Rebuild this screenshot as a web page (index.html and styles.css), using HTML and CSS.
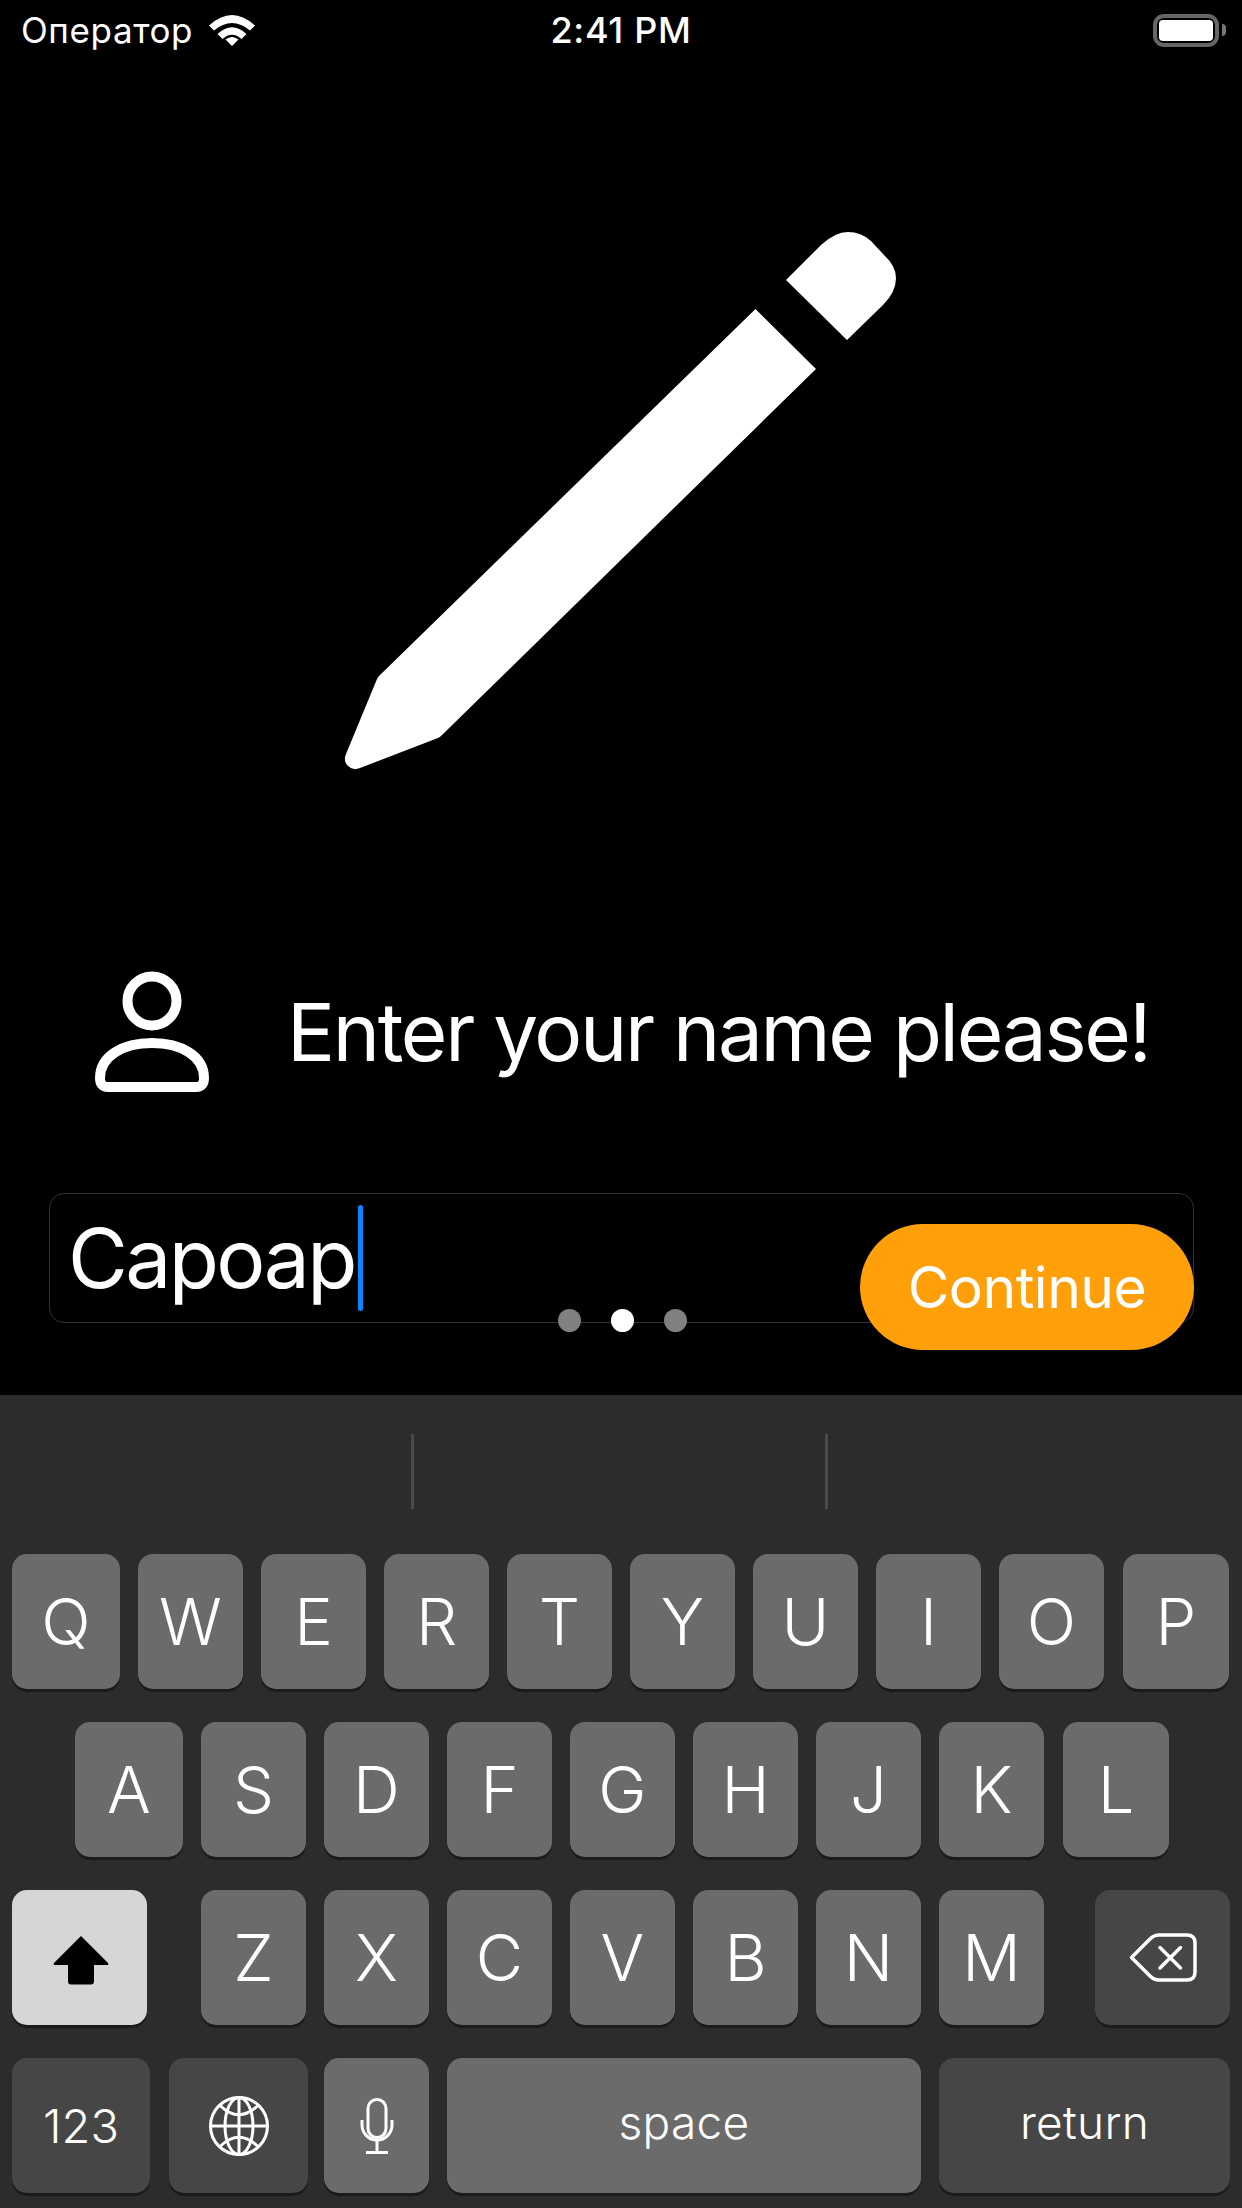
FILE: index.html
```html
<!DOCTYPE html>
<html lang="en">
<head>
  <meta charset="UTF-8" />
  <meta name="viewport" content="width=device-width, initial-scale=1.0" />
  <title>Enter your name</title>
  <link rel="stylesheet" href="styles.css">
</head>
<body>
  <main class="screen">
    <div class="status">
      <div class="status-left">
        <span>Оператор</span>
        <svg class="wifi" viewBox="0 0 46 31">
          <path fill="#fff" d="M0 10.500 Q23 -10.500 46 10.500 L41 15.500 Q23 0.500 5 15.500 Z" />
          <path fill="#fff" d="M8.500 19 Q23 5.500 37.500 19 L32.500 24 Q23 15.500 13.500 24 Z" />
          <path fill="#fff" d="M23 31 L16.500 24.500 Q23 19.500 29.500 24.500 Z" />
        </svg>
      </div>
      <div class="status-time">2:41 PM</div>
      <div class="status-right">
        <div class="battery"><div class="battery-level"></div></div>
        <div class="battery-nub"></div>
      </div>
    </div>

    <svg class="pencil" viewBox="340 225 560 550">
      <path fill="#fff" d="M786 280 L821 245 Q835 232 848 232 Q861 232 871 241 L884 255 Q896 266 896 278 Q896 292 883 305 L847 340 Z" />
      <path fill="#fff" d="M755.500 309 L816 369 L441 736 Q440 737 438 738 L360 768 Q353 771 348 766 Q343 761 346 754 L377 679 Q378 677 380 675 Z" />
    </svg>

    <div class="prompt">
      <svg class="person" viewBox="0 0 114 124">
        <circle cx="57" cy="31" r="24.500" fill="none" stroke="#fff" stroke-width="10" />
        <path d="M5 108 C5 86 28 73 57 73 C86 73 109 86 109 108 Q109 117 101 117 H13 Q5 117 5 108 Z" fill="none" stroke="#fff" stroke-width="10" />
      </svg>
      <div class="prompt-text">Enter your name please!</div>
    </div>

    <div class="field">
      <span class="field-text">Capoap</span><span class="caret"></span>
    </div>

    <div class="dots">
      <span class="dot"></span>
      <span class="dot dot-active"></span>
      <span class="dot"></span>
    </div>
    <button class="continue" type="button">Continue</button>
  </main>

  <section class="keyboard">
    <div class="suggestions">
      <span class="divider"></span>
      <span class="divider"></span>
    </div>

    <div class="key-row">
      <div class="key key-edge">Q</div>
      <div class="key">W</div>
      <div class="key">E</div>
      <div class="key">R</div>
      <div class="key">T</div>
      <div class="key">Y</div>
      <div class="key">U</div>
      <div class="key">I</div>
      <div class="key">O</div>
      <div class="key key-last">P</div>
    </div>

    <div class="key-row row-home">
      <div class="key key-edge">A</div>
      <div class="key">S</div>
      <div class="key">D</div>
      <div class="key">F</div>
      <div class="key">G</div>
      <div class="key">H</div>
      <div class="key">J</div>
      <div class="key">K</div>
      <div class="key key-last">L</div>
    </div>

    <div class="key-row">
      <div class="key key-shift">
        <svg class="icon-shift" viewBox="0 0 58 50">
          <path d="M29 1 L56 28 Q57 30 55 30 H42 V46 Q42 49.500 39 49.500 H19 Q16 49.500 16 46 V30 H3 Q1 30 2 28 Z" fill="#000" />
        </svg>
      </div>
      <div class="key">Z</div>
      <div class="key">X</div>
      <div class="key">C</div>
      <div class="key">V</div>
      <div class="key">B</div>
      <div class="key">N</div>
      <div class="key">M</div>
      <div class="key key-dark key-delete">
        <svg class="icon-delete" viewBox="0 0 68 49" fill="none" stroke="#fff" stroke-width="3.500">
          <path d="M2.500 24.500 L21 6 Q25 2 30 2 H58 Q66 2 66 10 V39 Q66 47 58 47 H30 Q25 47 21 43 Z" stroke-linejoin="round" />
          <path d="M31 14.500 L51.500 35 M51.500 14.500 L31 35" stroke-linecap="round" />
        </svg>
      </div>
    </div>

    <div class="key-row">
      <div class="key key-dark key-123">123</div>
      <div class="key key-dark key-globe">
        <svg class="icon-globe" viewBox="0 0 60 60" fill="none" stroke="#fff" stroke-width="3">
          <circle cx="30" cy="30" r="28.500" />
          <ellipse cx="30" cy="30" rx="14" ry="28.500" />
          <path d="M30 1.500 V58.500 M1.500 30 H58.500" />
          <path d="M11 9.500 Q30 28 49 9.500 M11 50.500 Q30 32 49 50.500" />
        </svg>
      </div>
      <div class="key key-mic">
        <svg class="icon-mic" viewBox="0 0 34 56" fill="none" stroke="#fff" stroke-width="3">
          <rect x="8" y="1.500" width="18" height="38" rx="9" />
          <path d="M2 22 V27 A15 15 0 0 0 32 27 V22" />
          <path d="M17 42 V54 M6 54.500 H28" />
        </svg>
      </div>
      <div class="key key-text key-space">space</div>
      <div class="key key-dark key-text key-return">return</div>
    </div>
  </section>
</body>
</html>
```

FILE: styles.css
```css
* {
  box-sizing: border-box;
}
body {
  margin: 0;
  width: 1242px;
  height: 2208px;
  overflow: hidden;
  background: #000;
  color: #fff;
  font-family: Inter, "Noto Sans", sans-serif;
}

.screen {
  position: relative;
  height: 1395px;
  background: #000;
}

/* status bar */
.status {
  display: grid;
  grid-template-columns: 1fr auto 1fr;
  align-items: center;
  height: 60px;
  padding: 0 16px 0 21px;
  font-size: 35px;
}
.status-left {
  display: flex;
  align-items: center;
  gap: 16px;
  letter-spacing: 0.6px;
}
.wifi {
  width: 46px;
  height: 31px;
  margin-top: 1px;
}
.status-time {
  margin-left: -5px;
  font-size: 36px;
  font-weight: 500;
  letter-spacing: 0.7px;
}
.status-right {
  display: flex;
  align-items: center;
  justify-content: flex-end;
  gap: 3px;
}
.battery {
  width: 66px;
  height: 33px;
  padding: 2px;
  border: 4px solid #666;
  border-radius: 11px;
}
.battery-level {
  height: 100%;
  background: #fff;
  border-radius: 4px;
}
.battery-nub {
  width: 4px;
  height: 12px;
  background: #777;
  border-radius: 0 6px 6px 0;
}

.pencil {
  display: block;
  width: 560px;
  height: 550px;
  margin: 165px 0 0 340px;
}

.prompt {
  display: flex;
  align-items: center;
  gap: 78px;
  height: 124px;
  margin-top: 195px;
  padding-left: 95px;
}
.person {
  flex: none;
  width: 114px;
  height: 124px;
}
.prompt-text {
  padding-bottom: 2px;
  font-size: 80px;
  letter-spacing: -2.3px;
  white-space: nowrap;
}

/* name input */
.field {
  display: flex;
  align-items: center;
  height: 130px;
  margin: 99px 48px 0 49px;
  padding-left: 18px;
  border: 1px solid #333;
  border-radius: 15px;
}
.field-text {
  font-size: 82px;
  letter-spacing: -2.6px;
}
.caret {
  width: 5px;
  height: 106px;
  margin-left: 3px;
  background: #0a84ff;
  border-radius: 3px;
}

.dots {
  position: absolute;
  left: 558px;
  top: 1309px;
  display: flex;
  gap: 30px;
}
.dot {
  width: 23px;
  height: 23px;
  background: #808080;
  border-radius: 50%;
}
.dot-active {
  background: #fff;
}

.continue {
  position: absolute;
  left: 860px;
  top: 1224px;
  width: 334px;
  height: 126px;
  padding: 0;
  border: none;
  border-radius: 63px;
  background: #ff9f0a;
  color: #fff;
  font-family: inherit;
  font-size: 57px;
  letter-spacing: -0.5px;
}

/* keyboard */
.keyboard {
  display: flex;
  flex-direction: column;
  gap: 33px;
  height: 813px;
  background: #2c2c2c;
}
.suggestions {
  display: flex;
  gap: 411px;
  height: 126px;
  padding: 39px 0 12px 411px;
}
.divider {
  width: 3px;
  height: 75px;
  background: #4a4a4a;
}
.key-row {
  display: flex;
  gap: 18px;
  padding: 0 12px;
}
.row-home {
  padding-left: 75px;
}
.key {
  display: flex;
  flex: none;
  align-items: center;
  justify-content: center;
  width: 105px;
  height: 135px;
  background: #6b6b6b;
  border-radius: 15px;
  box-shadow: 0 3px 0 #1b1b1b;
  font-size: 65px;
  font-weight: 300;
}
.key-edge {
  width: 108px;
}
.key-last {
  width: 106px;
  margin-left: 1px;
}
.key-dark {
  background: #464646;
}
.key-shift {
  width: 135px;
  margin-right: 36px;
  background: #d6d6d6;
}
.key-delete {
  width: 135px;
  margin-left: 33px;
}
.key-123 {
  width: 138px;
  font-size: 47px;
  font-weight: 300;
}
.key-globe {
  width: 139px;
  margin-left: 1px;
}
.key-mic {
  margin-left: -2px;
}
.key-text {
  padding-bottom: 8px;
  font-size: 46px;
  font-weight: 300;
  letter-spacing: 0.3px;
}
.key-space {
  width: 474px;
}
.key-return {
  width: 291px;
}
.icon-shift {
  width: 58px;
  height: 50px;
  margin: 4px 0 0 3px;
}
.icon-delete {
  width: 68px;
  height: 49px;
}
.icon-globe {
  width: 60px;
  height: 60px;
}
.icon-mic {
  width: 34px;
  height: 56px;
}
```
